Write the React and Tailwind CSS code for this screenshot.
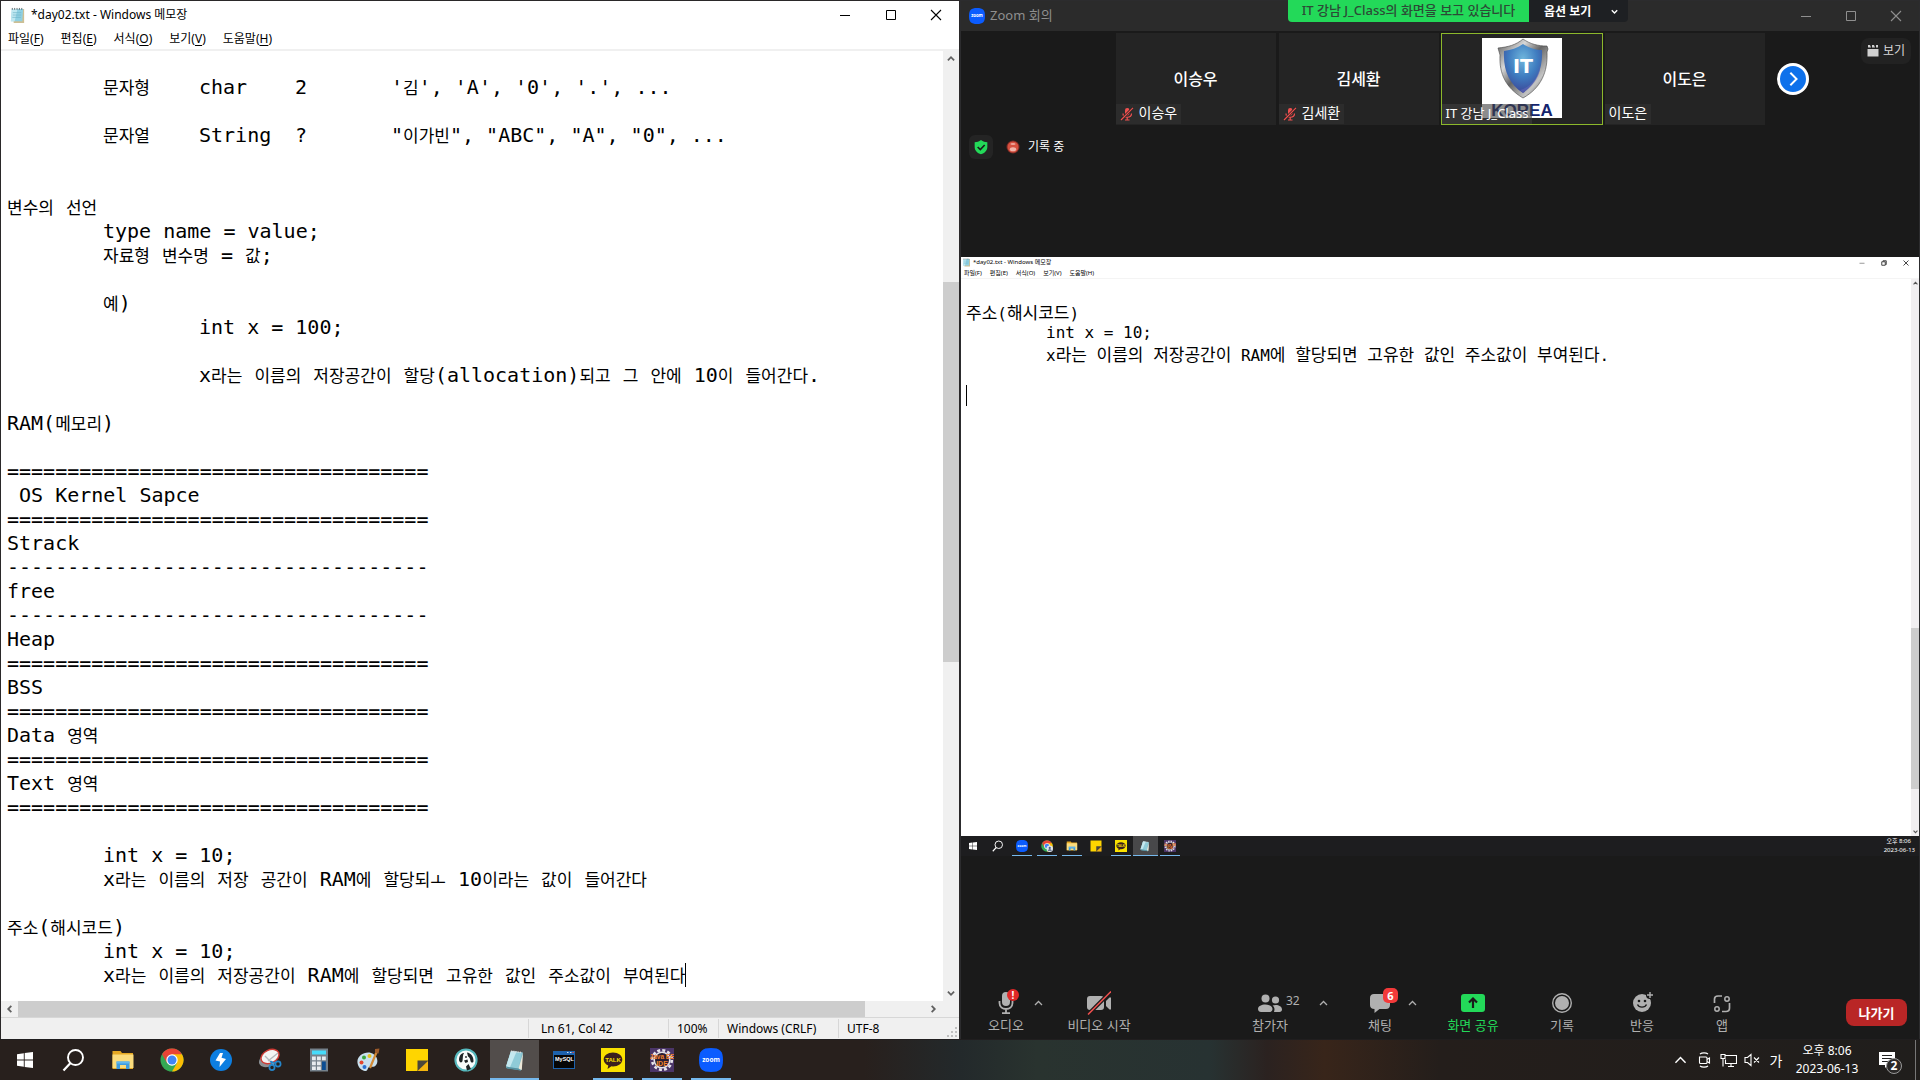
import React from "react";

const noteLines = [
  "",
  "\t문자형\tchar\t2\t'김', 'A', '0', '.', ...",
  "",
  "\t문자열\tString\t?\t\"이가빈\", \"ABC\", \"A\", \"0\", ...",
  "",
  "",
  "변수의 선언",
  "\ttype name = value;",
  "\t자료형 변수명 = 값;",
  "",
  "\t예)",
  "\t\tint x = 100;",
  "",
  "\t\tx라는 이름의 저장공간이 할당(allocation)되고 그 안에 10이 들어간다.",
  "",
  "RAM(메모리)",
  "",
  "===================================",
  " OS Kernel Sapce",
  "===================================",
  "Strack",
  "-----------------------------------",
  "free",
  "-----------------------------------",
  "Heap",
  "===================================",
  "BSS",
  "===================================",
  "Data 영역",
  "===================================",
  "Text 영역",
  "===================================",
  "",
  "\tint x = 10;",
  "\tx라는 이름의 저장 공간이 RAM에 할당되ㅗ 10이라는 값이 들어간다",
  "",
  "주소(해시코드)",
  "\tint x = 10;",
  "\tx라는 이름의 저장공간이 RAM에 할당되면 고유한 값인 주소값이 부여된다",
];

const sharedLines = [
  "주소(해시코드)",
  "\tint x = 10;",
  "\tx라는 이름의 저장공간이 RAM에 할당되면 고유한 값인 주소값이 부여된다.",
  "",
];

const menus = [
  ["파일", "F"],
  ["편집", "E"],
  ["서식", "O"],
  ["보기", "V"],
  ["도움말", "H"],
];

/* Hangul runs are set smaller than the monospaced Latin text around them. */
function Mixed({ text }) {
  return text
    .split(/([ㄱ-ㅎㅏ-ㅣ가-힣]+)/)
    .map((part, i) =>
      i % 2 ? (
        <span key={i} className="font-['Noto_Sans_CJK_KR',sans-serif] text-[17px]">
          {part}
        </span>
      ) : (
        part
      )
    );
}

/* ---------- icons ---------- */

const Svg = ({ s = 24, children, box = "0 0 24 24", ...rest }) => (
  <svg width={s} height={s} viewBox={box} fill="none" aria-hidden="true" className="block shrink-0" {...rest}>
    {children}
  </svg>
);

const NotepadIcon = ({ s }) => (
  <Svg s={s}>
    <path d="M8 3l12 1.500-2 18L3 20z" fill="#7fb9c6" />
    <path d="M8 3l11 1.400-3.500 16L3 18.600z" fill="#8fcbd8" />
    <path d="M8 3l5.500.700L7 19.200l-4-.600z" fill="#c4e8ef" />
    <path d="M15.500 20.400L20 5l-1.200 17z" fill="#ece7d8" />
    <path d="M3 18.600l12.500 1.800L18 22.500 4 20.600z" fill="#5590a0" />
    <path d="M8 3.200l11 1.400" stroke="#ddd" strokeWidth="1.600" strokeDasharray="1.200 1" />
  </Svg>
);

const TitleNoteIcon = ({ s }) => (
  <Svg s={s} box="0 0 16 18">
    <path d="M3 2h12v15H4z" fill="#cdbf94" />
    <path d="M2 2h12l-1 13H1z" fill="#8fd0e2" />
    <path d="M2 2h6L5 15H1z" fill="#bfe7f0" />
    <path d="M3 6h9M3 8.500h9M2.500 11h9" stroke="#6fb4c8" strokeWidth=".7" />
    <path d="M2.500 1v2M5 1v2M7.500 1v2M10 1v2M12.500 1v2" stroke="#57666b" strokeWidth="1" />
  </Svg>
);

const WindowsIcon = ({ s }) => (
  <Svg s={s}>
    <path
      d="M4 6.200l6.800-1v6.300H4zM11.700 5.100L20 4v7.500h-8.300zM4 12.500h6.800v6.300l-6.800-1zM11.700 12.500H20V20l-8.300-1.100z"
      fill="#fff"
    />
  </Svg>
);

const SearchIcon = ({ s }) => (
  <Svg s={s}>
    <circle cx="13.500" cy="9.500" r="7.500" stroke="#fff" strokeWidth="1.900" />
    <path d="M8.500 15l-7 7.500" stroke="#fff" strokeWidth="2.200" />
  </Svg>
);

const FolderIcon = ({ s }) => (
  <Svg s={s}>
    <path d="M1.500 3h8l1.500 2h11v16h-20.500z" fill="#e5a823" />
    <path d="M1.500 6.500h21V20h-21z" fill="#fbdc7d" />
    <path d="M5.500 21v-7.500h13V21h-3.500v-4h-6v4z" fill="#3f9de0" />
    <path d="M5.500 13.500h13v2h-13z" fill="#63b8ef" />
  </Svg>
);

const ChromeIcon = ({ s, badge }) => (
  <Svg s={s}>
    <circle cx="12" cy="12" r="11.500" fill="#34a853" />
    <path d="M12 12L2.040 6.250A11.500 11.500 0 0 1 21.960 6.250z" fill="#ea4335" />
    <path d="M2.040 6.250L7 14.900 12 12z" fill="#ea4335" />
    <path d="M21.960 6.250A11.500 11.500 0 0 1 12 23.500l5-8.600L12 6.250z" fill="#fbbc04" />
    <circle cx="12" cy="12" r="5.700" fill="#fff" />
    <circle cx="12" cy="12" r="4.500" fill="#4285f4" />
    {badge && (
      <>
        <circle cx="17.500" cy="17.500" r="6.500" fill="#dfe6ef" />
        <circle cx="17.500" cy="15.800" r="2.200" fill="#4a5a78" />
        <path d="M13.500 21.500c.5-4 7.500-4 8 0z" fill="#4a5a78" />
      </>
    )}
  </Svg>
);

const BoltIcon = ({ s }) => (
  <Svg s={s}>
    <circle cx="12" cy="12" r="11" fill="#0d7ee0" />
    <path d="M11 5l-4.500 7.500 4.500 1L10.500 19 17 11l-4.500-1.200L14 5z" fill="#fff" />
  </Svg>
);

const SnipIcon = ({ s }) => (
  <Svg s={s}>
    <ellipse cx="10" cy="12" rx="9.500" ry="6.500" fill="#8a8f94" transform="rotate(-25 10 12)" />
    <ellipse cx="12" cy="8.500" rx="9.500" ry="6.500" fill="#f4f4f4" stroke="#cf3b35" strokeWidth="1.500" transform="rotate(-25 12 8.500)" />
    <path d="M7 8l9 9M10 13l10-8" stroke="#b4b9bd" strokeWidth="1.400" />
    <circle cx="14" cy="19.500" r="2.600" stroke="#2585c9" strokeWidth="1.700" />
    <circle cx="20" cy="16" r="2.600" stroke="#2585c9" strokeWidth="1.700" />
    <path d="M14.500 17l-2-4M17.800 15.500l-5-2" stroke="#2585c9" strokeWidth="1.600" />
  </Svg>
);

const CalcIcon = ({ s }) => (
  <Svg s={s}>
    <path d="M3 .5h18v23H3z" fill="#75818b" />
    <path d="M5 2.500h14v4H5z" fill="#46dcfb" />
    <path
      d="M5 8.500h3.800v3.800H5zM10 8.500h3.800v3.800H10zM15 8.500h3.800v3.800H15zM5 13.500h3.800v3.800H5zM10 13.500h3.800v3.800H10zM5 18.500h3.800v3.500H5zM10 18.500h3.800v3.500H10z"
      fill="#e8ecef"
    />
    <path d="M15 13.500h3.800V22H15z" fill="#0c4d92" />
  </Svg>
);

const PaintIcon = ({ s }) => (
  <Svg s={s}>
    <path d="M2 17C-1 9 8 3 15 5c6 2 8 8 5 12-2 3-5 1-7 2-2 2-1 4-4 4-3-.3-6-3-7-6z" fill="#c9e0ee" />
    <circle cx="5.500" cy="14.500" r="2" fill="#e2452e" />
    <circle cx="8" cy="9.500" r="2" fill="#3ba73e" />
    <circle cx="13.500" cy="8" r="2" fill="#e8c21f" />
    <circle cx="8.500" cy="19" r="2" fill="#2b6fd0" />
    <path d="M21 3L14 20" stroke="#d38b38" strokeWidth="2.200" />
    <path d="M19 1l4.500-.5-1 5-3.500-.5z" fill="#9c5a2a" />
  </Svg>
);

const StickyIcon = ({ s }) => (
  <Svg s={s}>
    <path d="M1 1h22v12l-10.500 10H1z" fill="#ffd500" />
    <path d="M12.500 12.500H23V23H12.500z" fill="#4c473a" />
    <path d="M23 13v10H12.500z" fill="#f5b50f" />
  </Svg>
);

const DogIcon = ({ s }) => (
  <Svg s={s}>
    <circle cx="12" cy="12" r="10.600" fill="#f7fbfb" stroke="#56b8bd" strokeWidth="2" />
    <path d="M5 12c0-4.500 2.500-7 5-7-1.500 2-1 5-1.500 8C8 15 5.500 15 5 12z" fill="#1d2326" />
    <path d="M13 4.500c4 .5 6.500 4 6.500 8.500 0 2-2.500 2-3 0-.5-3-1.500-4-2.500-4.500z" fill="#1d2326" />
    <path d="M10 12.500l3.500-1 .5 2.500-2.500 1z" fill="#1d2326" />
    <path d="M14.500 16l2.500 5-4 1.500-1-4z" fill="#1d2326" />
    <circle cx="12" cy="9" r=".9" fill="#1d2326" />
  </Svg>
);

const MysqlIcon = ({ s }) => (
  <Svg s={s}>
    <path d="M1 3h22v18H1z" fill="#1d62ad" />
    <path d="M2 7h20v13H2z" fill="#050505" />
    <path d="M15 4.500h1.500M18 4.500h1.500" stroke="#cfe3f7" strokeWidth="1" />
    <path d="M20.500 4.500H22" stroke="#e04c3b" strokeWidth="1.200" />
    <text x="3" y="13" fontSize="5.500" fontWeight="700" fontFamily="Liberation Sans" fill="#fff">
      MySQL
    </text>
  </Svg>
);

const TalkIcon = ({ s }) => (
  <Svg s={s}>
    <path d="M0 0h24v24H0z" fill="#fae100" />
    <path d="M12 4.500c5.200 0 9.300 3 9.300 6.900s-4.100 7-9.300 7l-1.600-.1L6.500 21l.8-3.600C4.500 16.300 2.700 14 2.700 11.400c0-3.900 4.100-6.900 9.300-6.900z" fill="#3b1f1e" />
    <text x="12" y="13.600" textAnchor="middle" fontSize="6" fontWeight="700" fontFamily="Liberation Sans" fill="#fae100">
      TALK
    </text>
  </Svg>
);

const JavaIcon = ({ s }) => (
  <Svg s={s}>
    <path d="M0 0h24v24H0z" fill="#4b3568" />
    <circle cx="12" cy="12" r="9.800" stroke="#e6e3ea" strokeWidth="2.600" strokeDasharray="3 2.130" />
    <circle cx="12" cy="12" r="7.800" fill="#2a1d33" stroke="#e6e3ea" strokeWidth="1.600" />
    <text x="12" y="11" textAnchor="middle" fontSize="6.500" fontWeight="700" fontFamily="Liberation Sans" fill="#f0812a">
      Java EE
    </text>
    <text x="12" y="18" textAnchor="middle" fontSize="7" fontWeight="700" fontFamily="Liberation Sans" fill="#f0812a">
      IDE
    </text>
  </Svg>
);

const ZoomIcon = ({ s }) => (
  <Svg s={s}>
    <path d="M12 0c9 0 12 3 12 12s-3 12-12 12S0 21 0 12 3 0 12 0z" fill="#0b5cff" />
    <text x="12" y="14" textAnchor="middle" fontSize="6.500" fontWeight="700" fontFamily="Open Sans" fill="#fff">
      zoom
    </text>
  </Svg>
);

const MinIcon = ({ s = 12 }) => (
  <Svg s={s} box="0 0 12 12">
    <path d="M1 6.500h10" stroke="currentColor" />
  </Svg>
);
const MaxIcon = ({ s = 12 }) => (
  <Svg s={s} box="0 0 12 12">
    <path d="M1.500 1.500h9v9h-9z" stroke="currentColor" />
  </Svg>
);
const RestoreIcon = ({ s = 6 }) => (
  <Svg s={s} box="0 0 12 12">
    <path d="M1.500 3.500h7v7h-7zM4 3V1.500h6.500V9H9" stroke="currentColor" strokeWidth="1.800" />
  </Svg>
);
const CloseIcon = ({ s = 12, w = 1.1 }) => (
  <Svg s={s} box="0 0 12 12">
    <path d="M1 1l10 10M11 1L1 11" stroke="currentColor" strokeWidth={w} />
  </Svg>
);

const Chevron = ({ d, s = 8, w = 2 }) => {
  const paths = { up: "M1 6l3.500-3.500L8 6", down: "M1 3l3.500 3.500L8 3", left: "M6 1L2.500 4.500 6 8", right: "M3 1l3.500 3.500L3 8" };
  return (
    <Svg s={s} box="0 0 9 9">
      <path d={paths[d]} stroke="currentColor" strokeWidth={w} />
    </Svg>
  );
};

const MutedMic = () => (
  <Svg s={14} box="0 0 14 14">
    <rect x="5" y="1" width="4.500" height="7.500" rx="2.200" fill="#f0504f" />
    <path d="M3 6.500c0 5 8.500 5 8.500 0M7.200 10.500V13M5 13h4.500" stroke="#f0504f" strokeWidth="1.200" />
    <path d="M13 .8L1 13" stroke="#242424" strokeWidth="2.600" />
    <path d="M13 .8L1 13" stroke="#f0504f" strokeWidth="1.200" />
  </Svg>
);

const ShieldLogo = () => (
  <Svg s={80} box="0 0 80 80">
    <defs>
      <linearGradient id="steel" x1="0" y1="0" x2="1" y2="1">
        <stop offset="0" stopColor="#555" />
        <stop offset=".3" stopColor="#d8d8d8" />
        <stop offset=".5" stopColor="#666" />
        <stop offset=".75" stopColor="#c4c4c4" />
        <stop offset="1" stopColor="#333" />
      </linearGradient>
      <radialGradient id="glow" cx=".5" cy=".3" r=".75">
        <stop offset="0" stopColor="#6fb6dc" />
        <stop offset=".5" stopColor="#3f7cc0" />
        <stop offset="1" stopColor="#3b3f92" />
      </radialGradient>
    </defs>
    <path d="M0 0h80v80H0z" fill="#fff" />
    <path d="M41 1c7 5 15 7 24 7l1 3-1 3c1 20-6 36-24 46C24 50 17 36 18 17l-2-7c10-1 18-3 25-9z" fill="url(#steel)" stroke="#444" strokeWidth=".6" />
    <path d="M41 6c6 4 13 6 19 6 1 18-5 33-19 43C27 46 21 32 22 13c7-1 13-3 19-7z" fill="url(#glow)" />
    <path d="M58 28c-2 12-8 20-20 24l3 3c12-8 18-20 17-27z" fill="#6068b8" opacity=".6" />
    <text x="41" y="35" textAnchor="middle" fontSize="19" fontWeight="700" fontFamily="DejaVu Sans" fill="#fff">
      IT
    </text>
    <text x="40" y="78" textAnchor="middle" fontSize="17" fontWeight="700" fontFamily="Liberation Sans" fill="#14246e">
      KOREA
    </text>
  </Svg>
);

/* ---------- notepad ---------- */

function Notepad() {
  return (
    <section className="flex flex-col border-x border-t border-[#2a2829] bg-white text-black">
      <header className="flex h-7 items-center text-[12px]">
        <span className="pl-2">
          <TitleNoteIcon s={17} />
        </span>
        <h1 className="flex-1 pl-[5px] font-normal">*day02.txt - Windows 메모장</h1>
        <button aria-label="최소화" className="flex w-[46px] justify-center"><MinIcon /></button>
        <button aria-label="최대화" className="flex w-[45px] justify-center"><MaxIcon /></button>
        <button aria-label="닫기" className="flex w-[46px] justify-center"><CloseIcon /></button>
      </header>
      <nav className="flex h-[22px] items-end gap-[17px] border-b-2 border-[#f0f0f0] pl-[7px] text-[12px] leading-5">
        {menus.map(([name, key]) => (
          <button key={key}>
            {name}(<u className="underline-offset-2">{key}</u>)
          </button>
        ))}
      </nav>
      <div className="flex flex-1">
        <div
          role="textbox"
          aria-multiline="true"
          aria-label="day02.txt"
          contentEditable
          suppressContentEditableWarning
          spellCheck={false}
          className="min-w-0 flex-1 overflow-hidden whitespace-pre pl-[6px] font-['DejaVu_Sans_Mono','Noto_Sans_CJK_KR',monospace] text-[20px] leading-6 outline-none [tab-size:96px]"
        >
          {noteLines.map((line, i) => (
            <div key={i} className="flex h-6">
              <span>
                <Mixed text={line} />
              </span>
              {i === noteLines.length - 1 && <span className="w-px bg-black" />}
            </div>
          ))}
        </div>
        <div className="flex w-4 flex-col items-center bg-[#f0f0f0] text-[#606060]">
          <div className="flex h-[231px] w-full justify-center pt-1"><Chevron d="up" /></div>
          <div className="h-[380px] w-full bg-[#cdcdcd]" />
          <div className="flex w-full flex-1 items-end justify-center pb-1"><Chevron d="down" /></div>
        </div>
      </div>
      <div className="flex h-4 items-center bg-[#f0f0f0] text-[#606060]">
        <div className="flex w-[17px] justify-center"><Chevron d="left" /></div>
        <div className="h-4 w-[847px] bg-[#cdcdcd]" />
        <div className="flex flex-1 justify-end pr-[22px]"><Chevron d="right" /></div>
      </div>
      <footer className="flex h-[22px] items-stretch border-t border-[#d7d7d7] bg-[#f0f0f0] py-px text-[12px] leading-[19px]">
        <div className="flex-1" />
        <div className="w-[140px] border-l border-[#d7d7d7] pl-3">Ln 61, Col 42</div>
        <div className="w-[50px] border-l border-[#d7d7d7] pl-2">100%</div>
        <div className="w-[120px] border-l border-[#d7d7d7] pl-2">Windows (CRLF)</div>
        <div className="flex w-[121px] items-end justify-between border-l border-[#d7d7d7] pl-2">
          UTF-8
          <Svg s={12} box="0 0 12 12">
            <path d="M8 1h2v2H8zM8 5h2v2H8zM8 9h2v2H8zM4 5h2v2H4zM4 9h2v2H4zM0 9h2v2H0z" fill="#bfbfbf" />
          </Svg>
        </div>
      </footer>
    </section>
  );
}

/* ---------- meeting window ---------- */

function Tile({ name, muted, logo }) {
  return (
    <li
      className={
        logo
          ? "relative -mx-px flex h-[92px] w-[162px] items-center justify-center border border-[#8cb82b] bg-[#242424] pb-0.5"
          : "relative flex h-[92px] w-40 items-center justify-center bg-[#242424]"
      }
    >
      {logo ? <ShieldLogo /> : <span className="text-[16px] font-medium">{name}</span>}
      <span
        className={
          logo
            ? "absolute bottom-0 left-0 flex h-5 items-center bg-[#404040]/60 px-1 text-[13px] leading-5"
            : "absolute bottom-px left-0 flex h-5 items-center gap-[5px] bg-[#303030]/70 px-1 text-[14px] leading-[18px]"
        }
      >
        {muted && <MutedMic />}
        <span className="-mt-0.5">{name}</span>
      </span>
    </li>
  );
}

function SharedScreen() {
  return (
    <div className="flex h-[599px] flex-col bg-white text-black">
      <div className="flex h-[11px] items-center text-[6px]">
        <span className="pl-px"><TitleNoteIcon s={9} /></span>
        <span className="flex-1 pl-0.5">*day02.txt - Windows 메모장</span>
        <div className="flex items-center gap-4 pr-[10px] text-[#333]">
          <MinIcon s={6} />
          <RestoreIcon />
          <CloseIcon s={6} w={1.8} />
        </div>
      </div>
      <div className="flex h-[11px] items-center gap-2 border-b border-[#f4f4f4] pl-[3px] text-[6px]">
        {menus.map(([name, key]) => (
          <span key={key}>
            {name}({key})
          </span>
        ))}
      </div>
      <div className="flex flex-1">
        <div className="flex-1 whitespace-pre pl-[5px] pt-[22px] font-['DejaVu_Sans_Mono','Noto_Sans_CJK_KR',monospace] text-[16px] leading-[21px] [tab-size:80px]">
          {sharedLines.map((line, i) => (
            <div key={i} className="h-[21px]">
              <Mixed text={line} />
            </div>
          ))}
          <div className="h-[21px] w-px bg-black" />
        </div>
        <div className="flex w-2 flex-col items-center bg-[#f1eff1] text-[#555]">
          <div className="flex h-[349px] justify-center pt-0.5"><Chevron d="up" s={5} /></div>
          <div className="h-[161px] w-full bg-[#cdcdcd]" />
          <div className="flex flex-1 items-end pb-0.5"><Chevron d="down" s={5} /></div>
        </div>
      </div>
      <div className="flex h-5 items-center bg-[#1d1d1f] text-white">
        <div className="flex h-full w-[221px]">
          {[
            [<WindowsIcon s={12} />, ""],
            [<SearchIcon s={12} />, ""],
            [<ZoomIcon s={12} />, "on"],
            [<ChromeIcon s={12} badge />, "on"],
            [<FolderIcon s={12} />, "on"],
            [<StickyIcon s={12} />, ""],
            [<TalkIcon s={12} />, "on"],
            [<NotepadIcon s={12} />, "active"],
            [<JavaIcon s={12} />, "on"],
          ].map(([icon, state], i) => (
            <div
              key={i}
              className={
                state === "active"
                  ? "flex flex-1 flex-col items-center justify-between bg-[#48484a] pt-1"
                  : "flex flex-1 flex-col items-center justify-between pt-1"
              }
            >
              {icon}
              {state && <div className={state === "active" ? "h-px w-full bg-[#76b9ed]" : "h-px w-5 bg-[#76b9ed]"} />}
            </div>
          ))}
        </div>
        <div className="flex-1 pr-1 text-right text-[6px] leading-[9px]">
          <div className="pr-1">오후 8:06</div>
          <div>2023-06-13</div>
        </div>
      </div>
    </div>
  );
}

function Tool({ label, width, color = "text-[#b0b0b0]", children }) {
  return (
    <button className={`flex shrink-0 flex-col items-center ${width} ${color}`}>
      <span className="relative flex h-6 items-center">{children}</span>
      <span className="text-[13px] leading-5">{label}</span>
    </button>
  );
}

const Caret = ({ label }) => (
  <button aria-label={label} className="flex h-6 w-3 items-center justify-center text-[#b0b0b0]">
    <Chevron d="up" s={9} w={1.3} />
  </button>
);

function Toolbar() {
  return (
    <footer className="flex items-start justify-between pb-[4px] pl-[19px] pr-3">
      <div className="flex">
        <Tool label="오디오" width="w-[52px]">
          <Svg s={24}>
            <rect x="8" y="1" width="8" height="14" rx="4" fill="#b0b0b0" />
            <path d="M5.500 10v2c0 8 13 8 13 0v-2M12 18v4M8 22.200h8" stroke="#b0b0b0" strokeWidth="1.800" />
          </Svg>
          <span className="absolute -top-0.5 left-[13px] flex size-3 items-center justify-center rounded-full bg-[#e02828] text-[10px] font-bold leading-3 text-white">
            !
          </span>
        </Tool>
        <Caret label="오디오 옵션" />
        <div className="w-[15px]" />
        <Tool label="비디오 시작" width="w-20">
          <Svg s={24}>
            <rect x="0" y="5" width="17" height="14" rx="3" fill="#b0b0b0" />
            <path d="M19 10l3.500-3.500H24v12h-1.500L19 15z" fill="#b0b0b0" />
            <path d="M24 .5L1 23.500" stroke="#1a1a1a" strokeWidth="4" />
            <path d="M24 .5L1 23.500" stroke="#f0504f" strokeWidth="1.500" />
          </Svg>
        </Tool>
      </div>
      <div className="flex">
        <Tool label="참가자" width="w-[94px]">
          <Svg s={24}>
            <circle cx="7.500" cy="7.500" r="4" fill="#b0b0b0" />
            <circle cx="17.500" cy="9" r="3.600" fill="#b0b0b0" />
            <path d="M0 18c0-6 14.500-6 14.500 0 0 2-1.500 3-3 3h-8.500C1.500 21 0 20 0 18zM16 21c1-3 .5-5-1.500-6.500 4-1.500 9.500 0 9.500 4 0 1.500-1 2.500-2.500 2.500z" fill="#b0b0b0" />
          </Svg>
          <span className="absolute left-7 top-0 text-[12px] leading-5">32</span>
        </Tool>
        <Caret label="참가자 옵션" />
        <div className="w-[25px]" />
        <Tool label="채팅" width="w-[52px]">
          <Svg s={24}>
            <path d="M6 3h12c2.500 0 4 1.500 4 4v7c0 2.500-1.500 4-4 4h-6.500L6.500 22v-4C3.500 18 2 16.500 2 14V7c0-2.500 1.500-4 4-4z" fill="#b0b0b0" />
          </Svg>
          <span className="absolute -top-[3px] left-[15px] flex size-[15px] items-center justify-center rounded-[5px] bg-[#f33a3a] text-[11px] font-bold leading-[15px] text-white">
            6
          </span>
        </Tool>
        <Caret label="채팅 옵션" />
        <div className="w-[15px]" />
        <Tool label="화면 공유" width="w-20" color="text-[#23d959]">
          <Svg s={24}>
            <rect x="0" y="3" width="24" height="18" rx="3" fill="#23d959" />
            <path d="M12 17V8M8 11.500L12 7.500l4 4" stroke="#1a1a1a" strokeWidth="2.200" />
          </Svg>
        </Tool>
        <div className="w-[9px]" />
        <Tool label="기록" width="w-20">
          <Svg s={24}>
            <circle cx="12" cy="12" r="9.300" stroke="#b0b0b0" strokeWidth="1.400" />
            <circle cx="12" cy="12" r="7" fill="#b0b0b0" />
          </Svg>
        </Tool>
        <Tool label="반응" width="w-20">
          <Svg s={24}>
            <circle cx="12" cy="12" r="9" fill="#b0b0b0" />
            <circle cx="9" cy="10" r="1.300" fill="#1a1a1a" />
            <circle cx="15" cy="10" r="1.300" fill="#1a1a1a" />
            <path d="M7.500 13.500c1.500 3.500 7.500 3.500 9 0" stroke="#1a1a1a" strokeWidth="1.400" />
            <circle cx="20" cy="4" r="4" fill="#1a1a1a" />
            <path d="M20 1v6M17 4h6" stroke="#b0b0b0" strokeWidth="1.400" />
          </Svg>
        </Tool>
        <Tool label="앱" width="w-20">
          <Svg s={24}>
            <path d="M12 5H8C5.500 5 4.500 6.500 4.500 8v4M19.500 12v5c0 2-1 3.500-3.500 3.500h-4" stroke="#b0b0b0" strokeWidth="1.700" />
            <circle cx="17" cy="8" r="2.200" stroke="#b0b0b0" strokeWidth="1.500" />
            <circle cx="7" cy="18" r="2.200" stroke="#b0b0b0" strokeWidth="1.500" />
          </Svg>
        </Tool>
      </div>
      <button className="mt-2 h-[27px] w-[61px] rounded-lg bg-[#b92626] text-[13px] font-bold leading-6 text-white">
        나가기
      </button>
    </footer>
  );
}

function Meeting() {
  return (
    <section className="relative flex flex-col border-x border-t border-[#2c2c2e] bg-[#1a1a1a] text-white">
      <header className="flex h-[30px] items-center bg-[#2b2b2b] text-[#8f8f8f]">
        <span className="pl-2"><ZoomIcon s={16} /></span>
        <h2 className="flex-1 pl-[5px] text-[13px] font-normal">Zoom 회의</h2>
        <button aria-label="최소화" className="flex w-[45px] justify-center"><MinIcon /></button>
        <button aria-label="최대화" className="flex w-[45px] justify-center"><MaxIcon /></button>
        <button aria-label="닫기" className="flex w-[46px] justify-center"><CloseIcon /></button>
      </header>
      <div className="absolute -top-px left-[327px] flex h-[22px] whitespace-nowrap text-[13px] leading-[21px]">
        <div className="w-[241px] overflow-hidden rounded-bl bg-[#23d959] text-center font-medium text-[#2c4a36]">
          IT 강남 J_Class의 화면을 보고 있습니다
        </div>
        <button className="flex w-[99px] items-center rounded-br bg-[#1e2023] pl-[15px] text-[12px] font-bold text-white">
          <span className="flex-1 text-left">옵션 보기</span>
          <span className="pr-[10px]"><Chevron d="down" s={7} w={1.8} /></span>
        </button>
      </div>
      <div className="grid grid-cols-[1fr_auto_1fr] pt-0.5">
        <div />
        <ul className="flex gap-[3px]">
          <Tile name="이승우" muted />
          <Tile name="김세환" muted />
          <Tile name="IT 강남 J_Class" logo />
          <Tile name="이도은" />
        </ul>
        <div className="flex items-start justify-between pl-3 pr-2">
          <button aria-label="다음 참가자" className="mt-[30px] flex size-8 items-center justify-center rounded-full border-[3px] border-white bg-[#0e71eb]">
            <Chevron d="right" s={16} w={1.1} />
          </button>
          <button className="mt-[5px] flex h-[26px] items-center gap-1 rounded-lg bg-[#222] px-[6px] text-[12px] text-[#d8d8d8]">
            <Svg s={12} box="0 0 12 12">
              <path d="M1 0h2l1 2.500H1zM5 0h2l1 2.500H5zM9 0h2v2.500H9zM.5 4h11v7.500H.5z" fill="#d0d0d0" />
            </Svg>
            보기
          </button>
        </div>
      </div>
      <div className="flex items-center pb-[98px] pl-2 pt-[10px]">
        <span className="flex size-6 items-center justify-center rounded-md bg-[#242424]">
          <Svg s={16}>
            <path d="M12 1.500c3 2.500 6 3.200 9.500 3.500v7c0 5.500-4 9-9.500 11-5.500-2-9.500-5.500-9.500-11V5C6 4.700 9 4 12 1.500z" fill="#23d959" />
            <path d="M7 12l4 4 6.500-7" stroke="#1a1a1a" strokeWidth="2.400" />
          </Svg>
        </span>
        <span className="ml-[13px]">
          <Svg s={14} box="0 0 14 14">
            <circle cx="7" cy="7" r="6.500" fill="#7d2a24" />
            <circle cx="7" cy="7" r="5.500" fill="#d6503f" />
            <ellipse cx="7" cy="4" rx="2.600" ry="1" fill="#eda498" />
            <ellipse cx="7" cy="9.300" rx="3.200" ry="2" fill="#f0b4a9" />
          </Svg>
        </span>
        <span className="ml-2 text-[12px]">기록 중</span>
      </div>
      <SharedScreen />
      <div className="min-h-8 flex-1" />
      <Toolbar />
    </section>
  );
}

/* ---------- taskbar ---------- */

const apps = [
  ["시작", <WindowsIcon s={24} />, ""],
  ["검색", <SearchIcon s={24} />, ""],
  ["파일 탐색기", <FolderIcon s={24} />, ""],
  ["Chrome", <ChromeIcon s={24} />, ""],
  ["반디집", <BoltIcon s={24} />, ""],
  ["캡처 도구", <SnipIcon s={24} />, ""],
  ["계산기", <CalcIcon s={24} />, ""],
  ["그림판", <PaintIcon s={24} />, ""],
  ["스티커 메모", <StickyIcon s={24} />, ""],
  ["DBeaver", <DogIcon s={24} />, ""],
  ["메모장", <NotepadIcon s={24} />, "active"],
  ["MySQL", <MysqlIcon s={24} />, ""],
  ["카카오톡", <TalkIcon s={24} />, "on"],
  ["Java EE IDE", <JavaIcon s={24} />, "on"],
  ["Zoom", <ZoomIcon s={24} />, "on"],
];

function Taskbar() {
  return (
    <footer className="flex h-10 bg-[linear-gradient(90deg,#28201d_0%,#28201d_45%,#23292b_50%,#29332f_54%,#273232_63%,#2b2220_66%,#38251a_69%,#241e1b_75%,#201e1c_100%)] text-white">
      {apps.map(([name, icon, state]) => (
        <button
          key={name}
          aria-label={name}
          className={
            state === "active"
              ? "flex w-[49px] flex-col items-center justify-between bg-[#524d4b] pt-2"
              : "flex w-[49px] flex-col items-center justify-between pt-2"
          }
        >
          {icon}
          {state && <span className={state === "active" ? "h-0.5 w-full bg-[#76b9ed]" : "h-0.5 w-10 bg-[#76b9ed]"} />}
        </button>
      ))}
      <div className="flex-1" />
      <div className="flex items-center">
        <button aria-label="숨겨진 아이콘" className="flex w-6 justify-center"><Chevron d="up" s={13} w={1} /></button>
        <button aria-label="모임 시작" className="flex w-6 justify-center">
          <Svg s={16} box="0 0 16 16">
            <path d="M3.500 5h6.500c1 0 1 .5 1 1v4.500c0 1-.5 1-1 1H4.500c-1 0-1-.5-1-1zM11 7.500l2.500-1.500v5L11 9.500M4 2c2-1.500 6-1.500 8 0M4 14c2 1.500 6 1.500 8 0" stroke="#fff" strokeWidth="1.100" />
          </Svg>
        </button>
        <button aria-label="네트워크" className="flex w-6 justify-center">
          <Svg s={17} box="0 0 17 17">
            <path d="M5 3.500h11.500v8H5.500v-4M1 2.500h4v4H1zM3 6.500v8M8 14.500h6M11 11.500v3" stroke="#fff" strokeWidth="1.100" />
          </Svg>
        </button>
        <button aria-label="음소거" className="flex w-6 justify-center">
          <Svg s={16} box="0 0 16 16">
            <path d="M1 5.500h2.500l3.500-3v11l-3.500-3H1zM10 5.500l5 5M15 5.500l-5 5" stroke="#fff" strokeWidth="1.100" />
          </Svg>
        </button>
        <button aria-label="한국어 입력" className="w-6 text-[14px]">가</button>
        <div className="w-[78px] text-center text-[12px] leading-[18px]">
          <div>오후 8:06</div>
          <div>2023-06-13</div>
        </div>
        <button aria-label="알림" className="relative ml-3 w-[37px]">
          <Svg s={18} box="0 0 18 18">
            <path d="M1 1h16v13h-7l-3 3v-3H1z" fill="#fff" />
            <path d="M4 4.500h10M4 7.500h10M4 10.500h6" stroke="#222" strokeWidth="1.100" />
          </Svg>
          <span className="absolute left-2 top-[7px] flex size-4 items-center justify-center rounded-full border border-[#9a9a9a] bg-[#2a2827] text-[12px] font-bold leading-none">
            2
          </span>
        </button>
        <div className="h-10 w-[5px] border-l border-[#777]" />
      </div>
    </footer>
  );
}

export default function App() {
  return (
    <div className="flex min-h-screen flex-col bg-[#201e1f] font-['Noto_Sans','Noto_Sans_CJK_KR',sans-serif]">
      <main className="grid flex-1 grid-cols-2 pb-px">
        <Notepad />
        <Meeting />
      </main>
      <Taskbar />
    </div>
  );
}
